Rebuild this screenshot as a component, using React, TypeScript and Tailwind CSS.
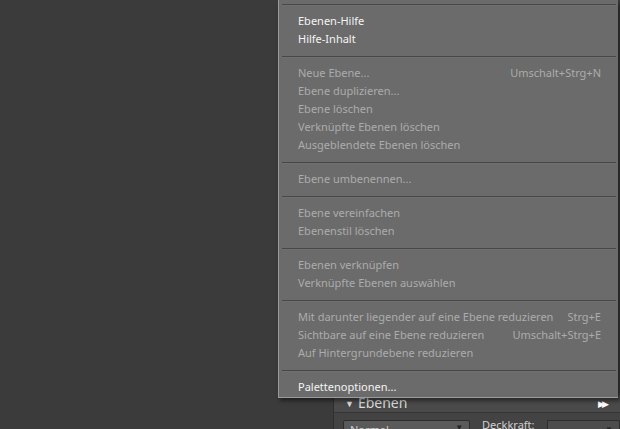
import React from "react";

type Item = { label: string; shortcut?: string; enabled?: boolean };

const groups: Item[][] = [
  [
    { label: "Ebenen-Hilfe", enabled: true },
    { label: "Hilfe-Inhalt", enabled: true },
  ],
  [
    { label: "Neue Ebene...", shortcut: "Umschalt+Strg+N" },
    { label: "Ebene duplizieren..." },
    { label: "Ebene löschen" },
    { label: "Verknüpfte Ebenen löschen" },
    { label: "Ausgeblendete Ebenen löschen" },
  ],
  [{ label: "Ebene umbenennen..." }],
  [{ label: "Ebene vereinfachen" }, { label: "Ebenenstil löschen" }],
  [{ label: "Ebenen verknüpfen" }, { label: "Verknüpfte Ebenen auswählen" }],
  [
    { label: "Mit darunter liegender auf eine Ebene reduzieren", shortcut: "Strg+E" },
    { label: "Sichtbare auf eine Ebene reduzieren", shortcut: "Umschalt+Strg+E" },
    { label: "Auf Hintergrundebene reduzieren" },
  ],
  [{ label: "Palettenoptionen...", enabled: true }],
];

function Sep() {
  return <div className="ml-[3px] mr-[2px] h-px bg-[#474747] border-b border-[#707070] box-content" />;
}

export default function App() {
  return (
    <div
      className="relative w-[620px] h-[429px] overflow-hidden bg-[#3b3b3b] flex"
      style={{ fontFamily: '"Noto Sans", "Open Sans", sans-serif' }}
    >
      <div className="flex-1" />
      <div className="w-[287px] flex flex-col justify-end">
        <div className="h-[34px] overflow-hidden bg-[#4a4a4a] border-l border-[#2f2f2f] flex flex-col">
          <div className="h-[16px] shrink-0 flex items-center pl-[11px] pr-[14px] text-[#dcdcdc] text-[14px] leading-none">
            <span className="text-[9px] mr-[4px]">▼</span>
            <span>Ebenen</span>
            <span className="ml-auto text-[9px] text-white tracking-[-3px]">▶▶</span>
          </div>
          <div className="mt-[1px] h-[30px] shrink-0 border-t border-[#353535] bg-[#434343] flex items-start pl-[9px] pt-[7px] gap-[12px] text-[11px] text-[#cfcfcf]">
            <div className="w-[133px] h-[14px] border border-[#2d2d2d] bg-[#5a5a5a] rounded-[2px] flex items-start pl-[6px] pt-[3px] leading-none relative">
              Normal
              <span className="absolute right-[6px] top-[2px] text-[8px] text-[#222]">▼</span>
            </div>
            <div className="leading-none mt-[-1px]">Deckkraft:</div>
            <div className="w-[77px] h-[14px] border border-[#2d2d2d] bg-[#4d4d4d] relative">
              <span className="absolute right-[6px] top-[2px] text-[8px] text-[#222]">▼</span>
            </div>
          </div>
        </div>
      </div>

      <div className="absolute left-[278px] top-0 w-[340px] bg-[#6b6b6b] border-l border-b border-[#9b9b9b] shadow-[2px_3px_4px_rgba(0,0,0,0.45)] pt-[4px] text-[11px]">
        {groups.map((g, gi) => (
          <div key={gi}>
            <Sep />
            <div className={gi === groups.length - 1 ? "pt-[6px] pb-[1px]" : "pt-[6px] pb-[8px]"}>
              {g.map((it, i) => (
                <div
                  key={i}
                  className={`h-[18px] flex items-center pl-[19px] pr-[17px] ${
                    it.enabled ? "text-[#f4f4f4]" : "text-[#acacac]"
                  }`}
                >
                  <span>{it.label}</span>
                  {it.shortcut && <span className="ml-auto">{it.shortcut}</span>}
                </div>
              ))}
            </div>
          </div>
        ))}
      </div>
    </div>
  );
}
